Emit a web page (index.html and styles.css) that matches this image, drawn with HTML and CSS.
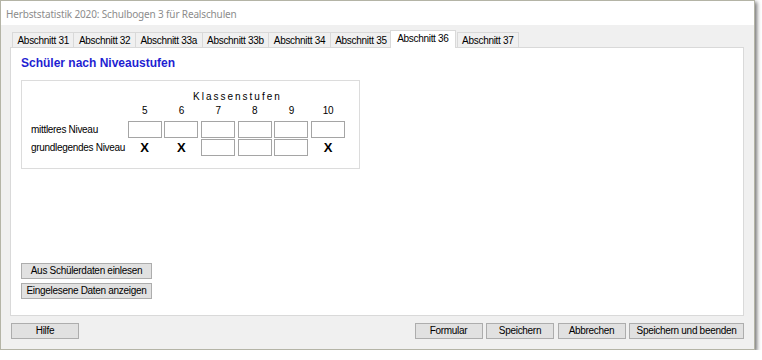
FILE: index.html
```html
<!DOCTYPE html>
<html lang="de">
<head>
    <meta charset="UTF-8">
    <meta name="viewport" content="width=device-width, initial-scale=1.0">
    <title>Herbststatistik 2020</title>
    <link rel="stylesheet" href="styles.css">
</head>
<body>
    <div class="window">
        <div class="titlebar">Herbststatistik 2020: Schulbogen 3 für Realschulen</div>

        <div class="client">
            <div class="tabs">
                <div class="tab">Abschnitt 31</div>
                <div class="tab">Abschnitt 32</div>
                <div class="tab">Abschnitt 33a</div>
                <div class="tab">Abschnitt 33b</div>
                <div class="tab">Abschnitt 34</div>
                <div class="tab">Abschnitt 35</div>
                <div class="tab active">Abschnitt 36</div>
                <div class="tab">Abschnitt 37</div>
            </div>

            <div class="panel">
                <h1>Schüler nach Niveaustufen</h1>

                <div class="group">
                    <div class="grid">
                        <div class="caption">Klassenstufen</div>

                        <div></div>
                        <div class="num">5</div>
                        <div class="num">6</div>
                        <div class="num">7</div>
                        <div class="num">8</div>
                        <div class="num">9</div>
                        <div class="num">10</div>

                        <div class="label">mittleres Niveau</div>
                        <input type="text" class="cell">
                        <input type="text" class="cell">
                        <input type="text" class="cell">
                        <input type="text" class="cell">
                        <input type="text" class="cell">
                        <input type="text" class="cell">

                        <div class="label">grundlegendes Niveau</div>
                        <div class="cross">X</div>
                        <div class="cross">X</div>
                        <input type="text" class="cell">
                        <input type="text" class="cell">
                        <input type="text" class="cell">
                        <div class="cross">X</div>
                    </div>
                </div>

                <div class="import">
                    <button class="btn wide">Aus Schülerdaten einlesen</button>
                    <button class="btn wide">Eingelesene Daten anzeigen</button>
                </div>
            </div>

            <div class="footer">
                <button class="btn">Hilfe</button>
                <div class="actions">
                    <button class="btn">Formular</button>
                    <button class="btn">Speichern</button>
                    <button class="btn">Abbrechen</button>
                    <button class="btn long">Speichern und beenden</button>
                </div>
            </div>
        </div>
    </div>
</body>
</html>
```

FILE: styles.css
```css
body {
    margin: 0;
    background-color: #fff;
    font-family: "Liberation Sans", Arial, sans-serif;
    font-size: 10px;
    letter-spacing: -0.3px;
    color: #000;
}
.window {
    width: 755px;
    height: 350px;
    box-sizing: border-box;
    border: 1px solid #b4b4a6;
    display: flex;
    flex-direction: column;
    box-shadow: 2px 2px 4px rgba(0, 0, 0, 0.55);
}
.titlebar {
    height: 24px;
    line-height: 26px;
    padding-left: 5px;
    background-color: #fff;
    color: #8c8c8c;
    font-family: "Noto Sans", "Open Sans", sans-serif;
    font-size: 10px;
    letter-spacing: -0.15px;
}
.client {
    flex: 1;
    background-color: #f0f0f0;
    padding: 5px 10px 10px 9px;
    display: flex;
    flex-direction: column;
}
.tabs {
    display: flex;
    align-items: flex-end;
    height: 17px;
    padding-left: 2px;
}
.tab {
    height: 15px;
    box-sizing: border-box;
    border: 1px solid #d9d9d9;
    border-bottom: none;
    margin-right: -1px;
    padding: 0 4.5px;
    line-height: 15px;
    white-space: nowrap;
    background-color: #f0f0f0;
}
.tab.active {
    height: 18px;
    margin: 0 1px -1px -1px;
    padding: 0 6px;
    background-color: #fff;
    line-height: 16px;
    position: relative;
    z-index: 1;
}
.panel {
    height: 269px;
    box-sizing: border-box;
    background-color: #fff;
    border: 1px solid #d9d9d9;
    padding: 8px 10px 16px 10px;
    display: flex;
    flex-direction: column;
}
h1 {
    margin: 0;
    font-size: 12px;
    line-height: 14px;
    letter-spacing: 0;
    font-weight: bold;
    color: #1f1fd2;
}
.group {
    margin-top: 10px;
    width: 339px;
    box-sizing: border-box;
    border: 1px solid #dcdcdc;
    padding: 9px 0 12px 9px;
}
.grid {
    display: grid;
    grid-template-columns: 94px repeat(6, 34px);
    column-gap: 2.7px;
    row-gap: 1px;
    align-items: center;
}
.caption {
    grid-column: 2 / 8;
    text-align: center;
    letter-spacing: 2px;
    padding-left: 2px;
    line-height: 13px;
}
.num {
    text-align: center;
    line-height: 13px;
    margin-bottom: 3px;
}
.label {
    white-space: nowrap;
    line-height: 17px;
}
.cell {
    width: 34px;
    height: 17px;
    box-sizing: border-box;
    margin: 0;
    border: 1px solid #a5a5a5;
    padding: 0;
    background-color: #fff;
}
.cross {
    text-align: center;
    font-size: 13px;
    letter-spacing: 0;
    font-weight: bold;
    line-height: 17px;
}
.import {
    margin-top: auto;
    display: flex;
    flex-direction: column;
    gap: 4px;
}
.btn {
    height: 16px;
    box-sizing: border-box;
    padding: 0;
    border: 1px solid #adadad;
    background-color: #e1e1e1;
    font-family: inherit;
    font-size: 10px;
    letter-spacing: -0.3px;
    line-height: 14px;
    white-space: nowrap;
    color: #000;
    width: 68px;
}
.btn.wide {
    width: 131px;
}
.btn.long {
    width: 115px;
}
.footer {
    margin-top: 7px;
    display: flex;
    padding-left: 1px;
}
.actions {
    margin-left: auto;
    display: flex;
    gap: 3.5px;
}
```
